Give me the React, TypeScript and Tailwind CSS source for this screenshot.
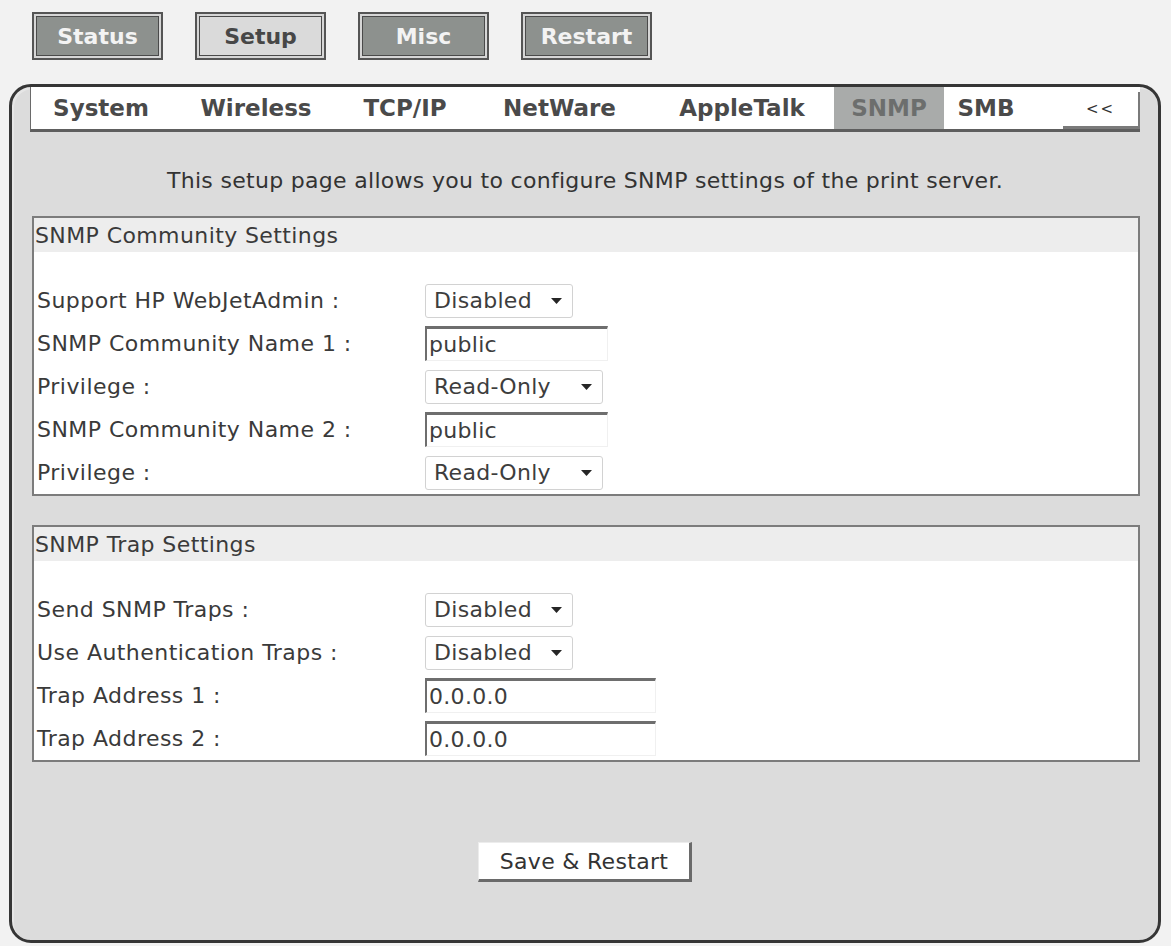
import React from 'react';

const topButtons = [
  { label: 'Status', active: false },
  { label: 'Setup', active: true },
  { label: 'Misc', active: false },
  { label: 'Restart', active: false },
];

const tabs = [
  { label: 'System', width: 'w-[140px]' },
  { label: 'Wireless', width: 'w-[170px]' },
  { label: 'TCP/IP', width: 'w-[128px]' },
  { label: 'NetWare', width: 'w-[181px]' },
  { label: 'AppleTalk', width: 'w-[184px]' },
  { label: 'SNMP', width: 'w-[110px]', current: true },
  { label: 'SMB', width: 'w-[84px]' },
];

const Caret: React.FC = () => (
  <svg width="11" height="6" viewBox="0 0 11 6" className="shrink-0">
    <polygon points="0,0 11,0 5.5,6" fill="#262626" />
  </svg>
);

const Select: React.FC<{ value: string; width: string }> = ({ value, width }) => (
  <div
    className={`${width} h-[34px] flex items-center bg-white border border-[#d2d2d2] rounded-[3px] pl-[8px] pr-[10px] text-[22px] tracking-[0.3px] text-[#3d3d3d]`}
  >
    <span className="flex-1">{value}</span>
    <Caret />
  </div>
);

const TextField: React.FC<{ value: string; width: string }> = ({ value, width }) => (
  <input
    readOnly
    defaultValue={value}
    className={`${width} h-[35px] bg-white border-t-[3px] border-l-[2px] border-r border-b border-t-[#6e6e6e] border-l-[#6e6e6e] border-r-[#f0f0f0] border-b-[#f0f0f0] pl-[2px] text-[22px] tracking-[0.3px] text-[#3d3d3d] font-['DejaVu_Sans',sans-serif] outline-none`}
  />
);

const Row: React.FC<{ label: string; children: React.ReactNode }> = ({ label, children }) => (
  <div className="h-[43px] flex items-center pl-[3px]">
    <div className="w-[388px] text-[22px] tracking-[0.45px] text-[#3a3a3a]">{label}</div>
    {children}
  </div>
);

const Section: React.FC<{ title: string; children: React.ReactNode }> = ({ title, children }) => (
  <div className="ml-[2px] border-2 border-[#7c7c7c] bg-white">
    <div className="h-[34px] bg-[#ededed] flex items-center pl-[1px] text-[22px] tracking-[0.4px] text-[#3a3a3a]">{title}</div>
    <div className="pt-[27px]">{children}</div>
  </div>
);

export default function App() {
  return (
    <div className="w-[1171px] h-[946px] bg-[#f2f2f2] font-['DejaVu_Sans',sans-serif] overflow-hidden">
      {/* top level menu */}
      <div className="flex gap-[32px] pl-[32px] pt-[12px]">
        {topButtons.map((b) => (
          <div key={b.label} className="w-[131px] h-[48px] border-2 border-[#555] bg-[#d6d6d6] p-[2px]">
            <div
              className={`h-full border border-[#4a4a4a] flex items-center justify-center text-[22px] font-bold ${
                b.active ? 'bg-[#dadada] text-[#474747]' : 'bg-[#8d918e] text-[#f3f3f3]'
              }`}
            >
              {b.label}
            </div>
          </div>
        ))}
      </div>

      {/* setup panel */}
      <div className="ml-[9px] mt-[24px] w-[1152px] h-[859px] border-[3px] border-[#363636] rounded-[22px] bg-[#dcdcdc] px-[18px] shadow-[inset_2px_2px_0_#e6e6e6]">
        <div className="h-[45px] flex bg-white border-l border-l-[#6a6a6a] border-b-[3px] border-b-[#5e5e5e]">
          {tabs.map((t) => (
            <div
              key={t.label}
              className={`${t.width} flex items-center justify-center text-[23px] font-bold ${
                t.current ? 'bg-[#a9abaa] text-[#6c6e6d]' : 'text-[#4a4a4a]'
              }`}
            >
              {t.label}
            </div>
          ))}
          <div className="flex-1" />
          <div className="w-[77px] mt-[5px] flex items-center justify-center bg-white border-r-2 border-b-[3px] border-[#7a7a7a] text-[15px] text-[#333] tracking-[2px]">
            &lt;&lt;
          </div>
        </div>

        <div className="pt-[36px] pb-[22px] text-center text-[22px] tracking-[0.3px] leading-[26px] text-[#333]">
          This setup page allows you to configure SNMP settings of the print server.
        </div>

        <Section title="SNMP Community Settings">
          <Row label="Support HP WebJetAdmin :">
            <Select value="Disabled" width="w-[148px]" />
          </Row>
          <Row label="SNMP Community Name 1 :">
            <TextField value="public" width="w-[183px]" />
          </Row>
          <Row label="Privilege :">
            <Select value="Read-Only" width="w-[178px]" />
          </Row>
          <Row label="SNMP Community Name 2 :">
            <TextField value="public" width="w-[183px]" />
          </Row>
          <Row label="Privilege :">
            <Select value="Read-Only" width="w-[178px]" />
          </Row>
        </Section>

        <div className="h-[29px]" />

        <Section title="SNMP Trap Settings">
          <Row label="Send SNMP Traps :">
            <Select value="Disabled" width="w-[148px]" />
          </Row>
          <Row label="Use Authentication Traps :">
            <Select value="Disabled" width="w-[148px]" />
          </Row>
          <Row label="Trap Address 1 :">
            <TextField value="0.0.0.0" width="w-[231px]" />
          </Row>
          <Row label="Trap Address 2 :">
            <TextField value="0.0.0.0" width="w-[231px]" />
          </Row>
        </Section>

        <div className="flex justify-center pt-[80px]">
          <button className="w-[214px] h-[40px] bg-white border-t border-l border-t-[#ececec] border-l-[#ececec] border-r-[3px] border-b-[3px] border-r-[#6a6a6a] border-b-[#6a6a6a] text-[22px] tracking-[0.3px] text-[#333] font-['DejaVu_Sans',sans-serif]">
            Save &amp; Restart
          </button>
        </div>
      </div>
    </div>
  );
}
